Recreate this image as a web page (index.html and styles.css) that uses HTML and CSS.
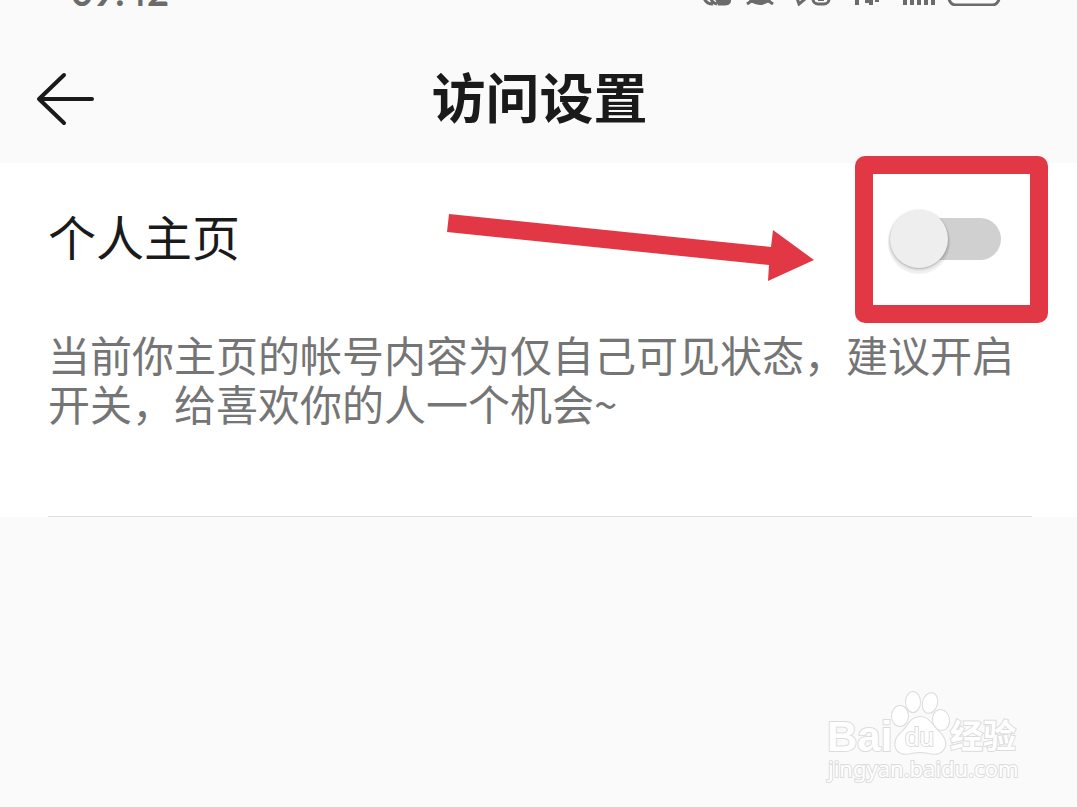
FILE: index.html
```html
<!DOCTYPE html>
<html lang="zh-CN">
<head>
    <meta charset="UTF-8">
    <meta name="viewport" content="width=device-width, initial-scale=1.0">
    <title>访问设置</title>
    <link rel="stylesheet" href="styles.css">
</head>
<body>
    <div class="status-bar">
        <span class="time">09:42</span>
        <svg class="status-icons" width="304" height="40" viewBox="0 0 304 40" fill="none" stroke="#6b6b6b" stroke-width="3">
            <!-- nfc, alarm, call, signal -->
            <path d="M5 32 Q7 38 14 38 M11 31 Q13 37 18 38"/>
            <path d="M17 32 H30 Q32 38 26 38 H20 Z" fill="#6b6b6b"/>
            <circle cx="61" cy="24" r="15" fill="#6b6b6b" stroke="none"/>
            <path d="M48 38 L54 34 M74 38 L68 34"/>
            <path d="M98 32 L100 38 L106 33"/>
            <rect x="114" y="12" width="16" height="26" rx="5"/>
            <path d="M119 34 H125" stroke-width="2"/>
            <path d="M158 39 V33 M168 37 V31 M172 39 V31 M178 36 V31" stroke-width="4"/>
            <path d="M206 39 V28 M213 39 V23 M220 39 V18 M227 39 V13 M234 39 V8" stroke-width="4"/>
            <rect x="250" y="12" width="50" height="27" rx="7"/>
        </svg>
    </div>

    <header class="header">
        <button class="back" type="button" aria-label="返回">
            <svg width="60" height="56" viewBox="0 0 60 56" fill="none" stroke="#1a1a1a" stroke-width="4" stroke-linecap="round" stroke-linejoin="round">
                <path d="M28 4 L3 28 L28 52 M3 28 H56"/>
            </svg>
        </button>
        <h1>访问设置</h1>
    </header>

    <main class="card">
        <div class="row">
            <label for="homepage">个人主页</label>
            <input class="switch" type="checkbox" role="switch" id="homepage" aria-describedby="homepage-desc">
            <svg class="marker" width="610" height="180" viewBox="0 0 610 180" fill="#e23845">
                <path d="M9 61 L331 94 L333 77 L374 107 L328 128 L329 112 L7 79 Z"/>
                <path fill-rule="evenodd" d="M425 3 H598 A10 10 0 0 1 608 13 V160 A10 10 0 0 1 598 170 H425 A10 10 0 0 1 415 160 V13 A10 10 0 0 1 425 3 Z M433 21 V152 H590 V21 Z"/>
            </svg>
        </div>
        <p class="desc" id="homepage-desc">当前你主页的帐号内容为仅自己可见状态，建议开启开关，给喜欢你的人一个机会~</p>
    </main>

    <svg class="watermark" width="200" height="96" viewBox="0 0 200 96">
        <text class="logo" x="3" y="61">Bai</text>
        <g class="paw">
            <ellipse cx="76" cy="26" rx="8" ry="10"/>
            <ellipse cx="89" cy="12" rx="7" ry="10"/>
            <ellipse cx="106" cy="13" rx="7" ry="10" transform="rotate(15 106 13)"/>
            <ellipse cx="117" cy="30" rx="8" ry="10" transform="rotate(-10 117 30)"/>
            <path d="M96 27 C105 27 108 35 114 41 C120 46 124 54 119 60 C113 67 104 62 96 62 C88 62 79 67 73 60 C69 53 73 46 79 41 C84 36 87 27 96 27 Z"/>
        </g>
        <text class="du" x="81" y="56">du</text>
        <text class="cn" x="126" y="58">经验</text>
        <text class="url" x="4" y="87">jingyan.baidu.com</text>
    </svg>
</body>
</html>
```
FILE: styles.css
```css
* {
  box-sizing: border-box;
}

body {
  position: relative;
  margin: 0;
  min-height: 100vh;
  background-color: #fafafa;
  color: #1a1a1a;
  font-family: "Noto Sans CJK SC", sans-serif;
}

.status-bar {
  display: flex;
  justify-content: space-between;
  align-items: flex-start;
  height: 36px;
  padding: 0 74px 0 71px;
  overflow: hidden;
}

.time,
.status-icons {
  flex: none;
  height: 40px;
  margin-top: -34px;
}

.time {
  color: #6b6b6b;
  font-family: Lato, sans-serif;
  font-size: 38px;
  font-weight: 700;
  line-height: 50px;
}

.header {
  display: grid;
  grid-template-columns: 60px 1fr 60px;
  align-items: center;
  height: 127px;
  padding: 0 34px 2px 36px;
}

.header h1 {
  margin: 0;
  padding-bottom: 6px;
  font-size: 54px;
  font-weight: 700;
  line-height: 64px;
  text-align: center;
}

.back {
  display: flex;
  padding: 0;
  border: none;
  background: none;
  cursor: pointer;
}

.card {
  padding-bottom: 90px;
  background: linear-gradient(#dedede, #dedede) 48px 100% / calc(100% - 93px) 1px no-repeat #fff;
}

.row {
  position: relative;
  display: flex;
  justify-content: space-between;
  align-items: center;
  height: 152px;
  padding: 0 76px 0 48px;
}

.row label {
  padding-bottom: 8px;
  font-size: 48px;
  line-height: 56px;
}

.switch {
  appearance: none;
  display: flex;
  align-items: center;
  width: 104px;
  height: 42px;
  margin: 0;
  border-radius: 21px;
  background-color: #d0d0d0;
  cursor: pointer;
}

.switch::before {
  content: "";
  flex: none;
  width: 58px;
  height: 58px;
  margin-left: -7px;
  border-radius: 50%;
  background-color: #eee;
  box-shadow: 0 1px 3px rgba(0, 0, 0, 0.3), 0 4px 1px 2px rgba(0, 0, 0, 0.06);
}

.switch:checked {
  justify-content: flex-end;
}

/* red arrow and frame pointing at the switch */
.marker {
  position: absolute;
  top: -10px;
  right: 27px;
  pointer-events: none;
}

.desc {
  margin: 0;
  padding: 14px 45px 0 48px;
  color: #757575;
  font-size: 42px;
  line-height: 49px;
}

.watermark {
  position: absolute;
  right: 53px;
  bottom: 21px;
  fill: #fff;
  stroke: #dcdcdc;
  stroke-width: 2px;
  paint-order: stroke;
}

.logo,
.du {
  font-family: "Liberation Sans", sans-serif;
  font-size: 42px;
  font-weight: 700;
}

.du {
  font-size: 26px;
  font-weight: 400;
}

.cn {
  font-size: 33px;
  font-weight: 700;
}

.url {
  font-family: "Noto Sans", sans-serif;
  font-size: 22px;
}
```
